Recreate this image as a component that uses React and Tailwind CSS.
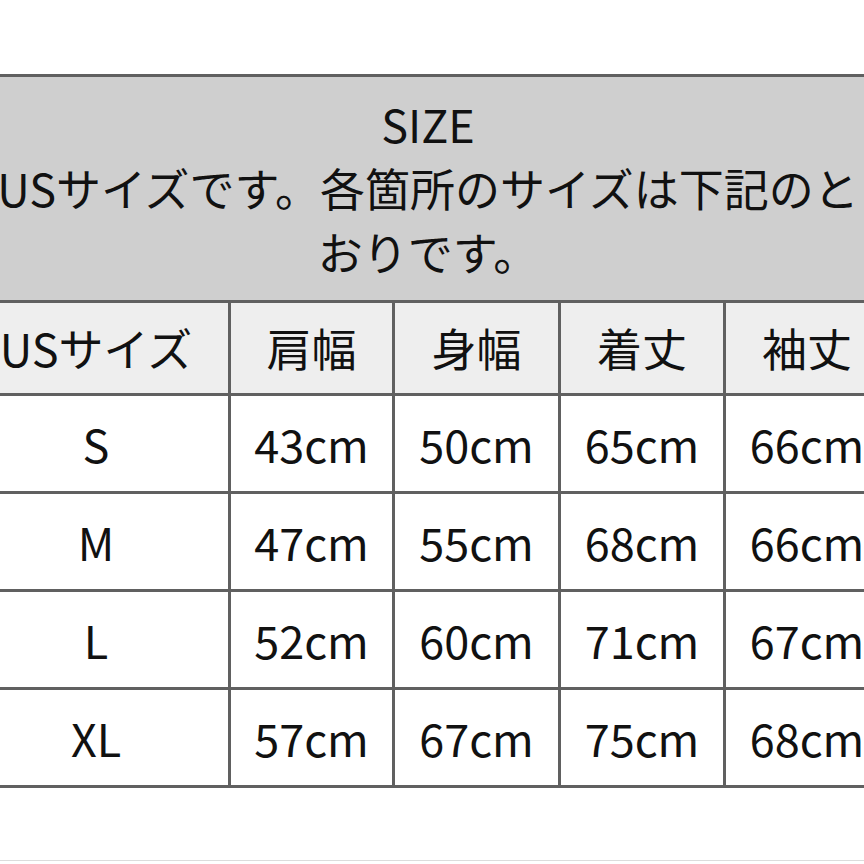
export default function App() {
  const cols = ["USサイズ", "肩幅", "身幅", "着丈", "袖丈"];
  const rows = [
    ["S", "43cm", "50cm", "65cm", "66cm"],
    ["M", "47cm", "55cm", "68cm", "66cm"],
    ["L", "52cm", "60cm", "71cm", "67cm"],
    ["XL", "57cm", "67cm", "75cm", "68cm"],
  ];

  return (
    <div
      className="w-[864px] h-[864px] overflow-hidden bg-white text-[#111] text-[45px]"
      style={{ fontFamily: '"Noto Sans CJK JP", "Noto Sans", sans-serif' }}
    >
      <div className="h-[74px]" />
      <div className="ml-[-36px] w-[924px]">
        {/* title block */}
        <div className="border-t-[3px] border-[#606060] bg-[#cfcfcf] h-[226px] pt-[15px]">
          <div className="ml-[24px] w-[880px] text-center leading-[64px]">
            SIZE
            <br />
            USサイズです。各箇所のサイズは下記のとおりです。
          </div>
        </div>

        {/* size table */}
        <div className="grid grid-cols-[264px_161px_163px_162px_162px] gap-[3px] bg-[#606060] border-y-[3px] border-[#606060]">
          {cols.map((c) => (
            <div
              key={c}
              className="h-[90px] bg-[#eeeeee] flex items-center justify-center"
            >
              {c}
            </div>
          ))}
          {rows.map((r) =>
            r.map((v, i) => (
              <div
                key={r[0] + i}
                className="h-[95px] bg-white flex items-center justify-center"
              >
                {v}
              </div>
            ))
          )}
        </div>
      </div>
      <div className="h-[73px] border-b border-[#dcdcdc]" />
    </div>
  );
}
